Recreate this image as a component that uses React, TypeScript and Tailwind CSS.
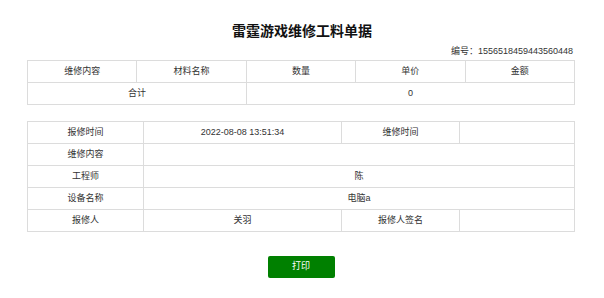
const cell = "border border-[#dcdcdc] text-center align-middle p-0 font-normal";

const materialHeads = ["维修内容", "材料名称", "数量", "单价", "金额"];

export default function App() {
  return (
    <div
      className="bg-white px-[27px] pt-[22px] pb-5 text-[9px] text-[#333]"
      style={{ fontFamily: '"Liberation Sans", "Noto Sans CJK SC", sans-serif' }}
    >
      <h1 className="text-center text-[14px] font-bold leading-[18px] text-[#111]">雷霆游戏维修工料单据</h1>
      <div className="mt-[5px] mb-[3px] text-right leading-[12px] pr-[4px]">编号：1556518459443560448</div>

      <table className="w-[548px] table-fixed border-collapse">
        <tbody>
          <tr className="h-[22px]">
            {materialHeads.map((h) => (
              <th key={h} className={cell}>
                {h}
              </th>
            ))}
          </tr>
          <tr className="h-[22px]">
            <td className={cell} colSpan={2}>
              合计
            </td>
            <td className={cell} colSpan={3}>
              0
            </td>
          </tr>
        </tbody>
      </table>

      <table className="mt-[16px] w-[548px] table-fixed border-collapse">
        <colgroup>
          <col className="w-[116px]" />
          <col className="w-[198px]" />
          <col className="w-[118px]" />
          <col />
        </colgroup>
        <tbody>
          <tr className="h-[22px]">
            <td className={cell}>报修时间</td>
            <td className={cell}>2022-08-08 13:51:34</td>
            <td className={cell}>维修时间</td>
            <td className={cell}></td>
          </tr>
          <tr className="h-[22px]">
            <td className={cell}>维修内容</td>
            <td className={cell} colSpan={3}></td>
          </tr>
          <tr className="h-[22px]">
            <td className={cell}>工程师</td>
            <td className={cell} colSpan={3}>
              陈
            </td>
          </tr>
          <tr className="h-[22px]">
            <td className={cell}>设备名称</td>
            <td className={cell} colSpan={3}>
              电脑a
            </td>
          </tr>
          <tr className="h-[22px]">
            <td className={cell}>报修人</td>
            <td className={cell}>关羽</td>
            <td className={cell}>报修人签名</td>
            <td className={cell}></td>
          </tr>
        </tbody>
      </table>

      <div className="mt-[24px] flex justify-center pr-[2px]">
        <button className="h-[22px] w-[67px] rounded-[2px] bg-[#008000] text-[9px] text-white">打印</button>
      </div>
    </div>
  );
}
